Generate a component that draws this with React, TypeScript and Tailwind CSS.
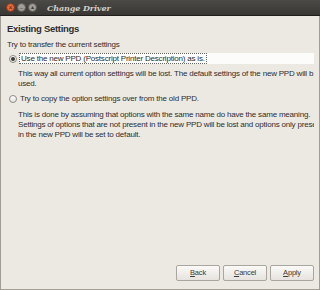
import React from "react";

const font = { fontFamily: '"Liberation Sans", Arial, sans-serif' };

function Radio({ checked }: { checked?: boolean }) {
  return (
    <span className="w-[8px] h-[8px] rounded-full border border-[#8d8a84] bg-gradient-to-b from-[#ffffff] to-[#e4e2dd] flex items-center justify-center shrink-0">
      {checked && <span className="w-[4px] h-[4px] rounded-full bg-[#3c3b37]" />}
    </span>
  );
}

function Btn({ label }: { label: string }) {
  return (
    <button className="w-[44px] h-[16px] rounded-[2px] border border-[#a9a69f] bg-gradient-to-b from-[#fbfaf8] to-[#e6e3de] text-[7.5px] text-[#3c3b37] flex items-center justify-center tracking-[-0.2px]">
      <span>
        <span className="underline">{label[0]}</span>
        {label.slice(1)}
      </span>
    </button>
  );
}

export default function App() {
  return (
    <div className="w-[320px] h-[290px] bg-[#f3f1ee] flex flex-col" style={font}>
      <div className="h-[16px] bg-gradient-to-b from-[#4b4a46] to-[#383733] border-b border-[#1f1e1c] flex items-center pl-[6px] gap-[2px] shrink-0">
        <span className="w-[9px] h-[9px] rounded-full bg-[#e9693a] border border-[#7a3a20] flex items-center justify-center text-[7px] text-[#5a2512] leading-none">×</span>
        <span className="w-[9px] h-[9px] rounded-full bg-[#a19e97] border border-[#5e5c57] flex items-center justify-center text-[6px] text-[#3c3b37] leading-none">–</span>
        <span className="w-[9px] h-[9px] rounded-full bg-[#a19e97] border border-[#5e5c57] flex items-center justify-center text-[5px] text-[#3c3b37] leading-none">▲</span>
        <span className="ml-[8px] text-[8px] italic font-bold text-[#d3cfc6] tracking-[-0.1px]" style={{ fontFamily: '"DejaVu Serif", serif' }}>Change Driver</span>
      </div>
      <div className="flex-1 border-x border-b border-[#a19d95] bg-[#ece9e3] flex flex-col pl-[6px] pr-[5px] text-[#2e2e2e] tracking-[-0.2px]">
        <div className="text-[9.5px] font-bold mt-[6px] leading-[14px] tracking-[-0.3px]">Existing Settings</div>
        <div className="text-[8px] mt-[4px] leading-[10px]">Try to transfer the current settings</div>
        <div className="flex items-center gap-[2px] mt-[3px] h-[11px] pl-[2px]">
          <Radio checked />
          <div className="flex-1 h-[11px] bg-[#fcfcfb] flex items-center">
            <span className="text-[8px] leading-[9px] border border-dotted border-[#666] px-[1px]">Use the new PPD (Postscript Printer Description) as is.</span>
          </div>
        </div>
        <div className="pl-[11px] text-[8px] leading-[10px] mt-[5px] whitespace-nowrap overflow-hidden">
          This way all current option settings will be lost. The default settings of the new PPD will b
          <br />used.
        </div>
        <div className="flex items-center gap-[3px] mt-[4px] h-[11px] pl-[2px]">
          <Radio />
          <span className="text-[8px] leading-[11px]">Try to copy the option settings over from the old PPD.</span>
        </div>
        <div className="pl-[11px] text-[8px] leading-[10px] mt-[6px] whitespace-nowrap overflow-hidden">
          This is done by assuming that options with the same name do have the same meaning.
          <br />Settings of options that are not present in the new PPD will be lost and options only preser
          <br />in the new PPD will be set to default.
        </div>
        <div className="flex-1" />
        <div className="flex justify-end gap-[3px] mb-[8px]">
          <Btn label="Back" />
          <Btn label="Cancel" />
          <Btn label="Apply" />
        </div>
      </div>
    </div>
  );
}
